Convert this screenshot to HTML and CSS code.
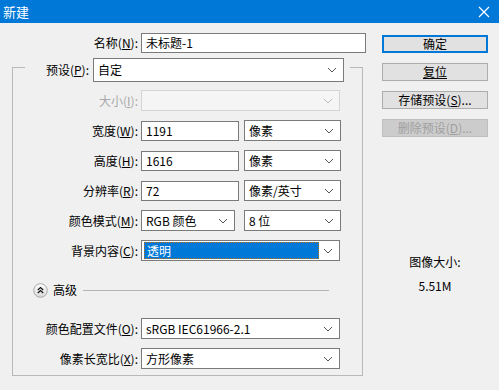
FILE: index.html
```html
<!DOCTYPE html>
<html>
<head>
  <title>新建</title>
  <link rel="stylesheet" href="styles.css">
</head>
<body>
  <!-- Title bar -->
  <div class="titlebar">
    <span class="title">新建</span>
    <svg class="close" width="12" height="12" viewBox="0 0 12 12"><path d="M1 1L11 11M11 1L1 11" stroke="#fff" stroke-width="1.2" fill="none"/></svg>
  </div>

  <div class="dialog">
    <div class="main">
      <div class="row name-row">
        <label class="lbl">名称(<u>N</u>):</label>
        <div class="field name-field">未标题-1</div>
      </div>

      <fieldset class="group">
        <legend class="preset">
          <label class="lbl preset-lbl">预设(<u>P</u>):</label>
          <div class="field select preset-field">自定<svg class="chev" width="10" height="6" viewBox="0 0 10 6"><path d="M1 1L5 5L9 1" stroke="#555" fill="none"/></svg></div>
        </legend>

        <div class="row">
          <label class="lbl disabled">大小(<u>I</u>):</label>
          <div class="field select wide off"><svg class="chev" width="10" height="6" viewBox="0 0 10 6"><path d="M1 1L5 5L9 1" stroke="#bbb" fill="none"/></svg></div>
        </div>

        <div class="row">
          <label class="lbl">宽度(<u>W</u>):</label>
          <div class="field num">1191</div>
          <div class="field select unit">像素<svg class="chev" width="10" height="6" viewBox="0 0 10 6"><path d="M1 1L5 5L9 1" stroke="#555" fill="none"/></svg></div>
        </div>

        <div class="row">
          <label class="lbl">高度(<u>H</u>):</label>
          <div class="field num">1616</div>
          <div class="field select unit">像素<svg class="chev" width="10" height="6" viewBox="0 0 10 6"><path d="M1 1L5 5L9 1" stroke="#555" fill="none"/></svg></div>
        </div>

        <div class="row">
          <label class="lbl">分辨率(<u>R</u>):</label>
          <div class="field num">72</div>
          <div class="field select unit">像素/英寸<svg class="chev" width="10" height="6" viewBox="0 0 10 6"><path d="M1 1L5 5L9 1" stroke="#555" fill="none"/></svg></div>
        </div>

        <div class="row">
          <label class="lbl">颜色模式(<u>M</u>):</label>
          <div class="field select mode">RGB 颜色<svg class="chev" width="10" height="6" viewBox="0 0 10 6"><path d="M1 1L5 5L9 1" stroke="#555" fill="none"/></svg></div>
          <div class="field select unit gap9">8 位<svg class="chev" width="10" height="6" viewBox="0 0 10 6"><path d="M1 1L5 5L9 1" stroke="#555" fill="none"/></svg></div>
        </div>

        <div class="row">
          <label class="lbl">背景内容(<u>C</u>):</label>
          <div class="field select wide">
            <span class="picked">透明</span>
            <svg class="chev" width="10" height="6" viewBox="0 0 10 6"><path d="M1 1L5 5L9 1" stroke="#555" fill="none"/></svg>
          </div>
        </div>

        <!-- Advanced section toggle -->
        <div class="advanced">
          <svg width="15" height="15" viewBox="0 0 15 15">
            <defs>
              <linearGradient id="knob" x1="0" y1="0" x2="0" y2="1">
                <stop offset="0" stop-color="#ffffff"/>
                <stop offset="1" stop-color="#d8d8d8"/>
              </linearGradient>
            </defs>
            <circle cx="7.5" cy="7.5" r="6.8" fill="url(#knob)" stroke="#a8a8a8"/>
            <path d="M4.8 7L7.5 4.5L10.2 7M4.8 10L7.5 7.5L10.2 10" stroke="#111" stroke-width="1.2" fill="none"/>
          </svg>
          <span class="adv-text">高级</span>
          <div class="adv-line"></div>
        </div>

        <div class="row">
          <label class="lbl">颜色配置文件(<u>O</u>):</label>
          <div class="field select wide">sRGB IEC61966-2.1<svg class="chev" width="10" height="6" viewBox="0 0 10 6"><path d="M1 1L5 5L9 1" stroke="#555" fill="none"/></svg></div>
        </div>

        <div class="row">
          <label class="lbl">像素长宽比(<u>X</u>):</label>
          <div class="field select wide">方形像素<svg class="chev" width="10" height="6" viewBox="0 0 10 6"><path d="M1 1L5 5L9 1" stroke="#555" fill="none"/></svg></div>
        </div>
      </fieldset>
    </div>

    <div class="side">
      <button class="btn default">确定</button>
      <button class="btn"><u>复位</u></button>
      <button class="btn">存储预设(<u>S</u>)...</button>
      <button class="btn" disabled>删除预设(<u>D</u>)...</button>
      <div class="info-title">图像大小:</div>
      <div class="info-value">5.51M</div>
    </div>
  </div>
</body>
</html>
```

FILE: styles.css
```css
body {
  margin: 0;
  background: #f0f0f0;
  font-family: "Noto Sans CJK SC", "Noto Sans", sans-serif;
  font-size: 12px;
  color: #000;
}

/* Title bar */
.titlebar {
  height: 23px;
  background: #0078d7;
  display: flex;
  align-items: center;
  justify-content: space-between;
  padding: 0 9px 0 3px;
}

.title {
  color: #fff;
  font-size: 13px;
}

.close {
  margin-top: 1px;
}

/* Dialog layout */
.dialog {
  display: flex;
  padding-top: 10px;
}

.main {
  width: 370px;
}

.side {
  margin-left: 12px;
  width: 106px;
  display: flex;
  flex-direction: column;
  padding-top: 2px;
}

.row {
  display: flex;
  align-items: center;
  height: 21px;
  margin-bottom: 9px;
}

.lbl {
  width: 125px;
  padding-right: 3px;
  text-align: right;
  white-space: nowrap;
  line-height: 16px;
}

.lbl.disabled {
  color: #a8a8a8;
}

.name-row {
  height: 20px;
  margin-bottom: 0;
}

.name-row .lbl {
  width: 138px;
}

/* Fields */
.field {
  box-sizing: border-box;
  height: 21px;
  background: #fff;
  border: 1px solid #7a7a7a;
  padding: 0 4px;
  display: flex;
  align-items: center;
  line-height: 16px;
  white-space: nowrap;
}

.select {
  justify-content: space-between;
  padding-right: 6px;
}

.name-field {
  width: 225px;
  height: 20px;
}

.num {
  width: 98px;
  height: 20px;
}

.unit {
  width: 97px;
  margin-left: 5px;
}

.unit.gap9 {
  margin-left: 9px;
}

.mode {
  width: 94px;
}

.wide {
  width: 199px;
}

.off {
  background: #f5f5f5;
  border-color: #d4d4d4;
  justify-content: flex-end;
}

.picked {
  box-sizing: border-box;
  width: 175px;
  height: 17px;
  margin-left: -2px;
  padding-left: 2px;
  background: #0078d7;
  color: #fff;
  border: 1px dotted #c07000;
  line-height: 15px;
}

/* Group box */
.group {
  margin: -1px 0 0 12px;
  padding: 8px 0 6px 0;
  width: 349px;
  border: 1px solid #b9b9b9;
  min-inline-size: 0;
}

.group .row:last-child {
  margin-bottom: 0;
}

.preset {
  margin-left: 12px;
  padding: 6px 6px 0 0;
  display: flex;
  align-items: center;
}

.preset-lbl {
  width: 64px;
}

.preset-field {
  width: 251px;
  height: 24px;
  margin-left: 1px;
}

/* Advanced toggle */
.advanced {
  display: flex;
  align-items: center;
  height: 16px;
  margin: 21px 0 20px 20px;
}

.adv-text {
  margin-left: 5px;
  line-height: 16px;
}

.adv-line {
  width: 246px;
  height: 1px;
  background: #b4b4b4;
  margin-left: 6px;
}

/* Buttons */
.btn {
  box-sizing: border-box;
  height: 18px;
  width: 106px;
  margin-bottom: 10px;
  padding: 0;
  background: #e1e1e1;
  border: 1px solid #adadad;
  font-family: "Noto Sans CJK SC", "Noto Sans", sans-serif;
  font-size: 12px;
  line-height: 14px;
  color: #000;
}

.btn.default {
  border: 2px solid #0078d7;
}

.btn:disabled {
  background: #cccccc;
  border-color: #bfbfbf;
  color: #a0a0a0;
}

.info-title {
  margin-top: 107px;
  text-align: center;
  line-height: 16px;
}

.info-value {
  margin-top: 8px;
  text-align: center;
  line-height: 16px;
}
```
